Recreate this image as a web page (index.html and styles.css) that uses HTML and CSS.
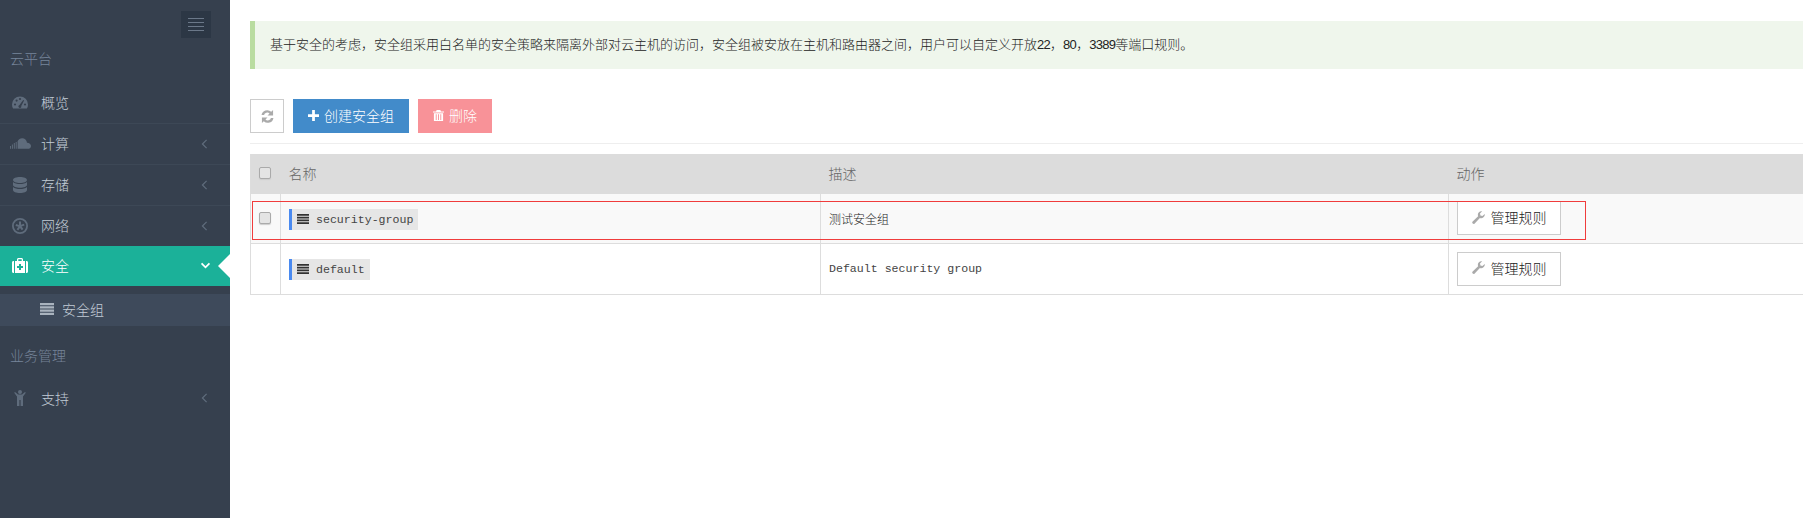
FILE: index.html
```html
<!DOCTYPE html>
<html lang="zh-CN">
<head>
    <meta charset="UTF-8">
    <title>安全组</title>
    <link rel="stylesheet" href="styles.css">
</head>
<body>

<aside class="sidebar">
    <div class="toggle"><span></span><span></span><span></span><span></span></div>
    <div class="section first">云平台</div>
    <ul class="menu">
        <li class="item">
            <svg class="ico" viewBox="0 0 16 16"><path d="M8 1.500a8 8 0 0 0-8 8c0 1.500.4 2.900 1.100 4h13.800c.7-1.100 1.100-2.500 1.100-4a8 8 0 0 0-8-8z"/><g fill="#36404e"><circle cx="3" cy="9.500" r="1.100"/><circle cx="4.600" cy="5.600" r="1.100"/><circle cx="8" cy="4" r="1.100"/><circle cx="13" cy="9.500" r="1.100"/><path d="M11.200 5l.9.6-2.800 5.400a1.500 1.500 0 1 1-1.800-1z"/></g></svg>
            <span>概览</span>
        </li>
        <li class="item">
            <svg class="ico ico-wide" viewBox="0 0 22 12"><path d="M0 8h1v3H0zM2 6.500h1V11H2zM4 5h1v6H4zM6 4h1v7H6z"/><path d="M8 3c1-1.800 2.700-3 4.700-3 2.700 0 4.900 2 5.100 4.600C20 4.500 22 6 22 8s-1.600 3-3.500 3H8z"/></svg>
            <span>计算</span>
            <svg class="chev" viewBox="0 0 8 12"><path d="M6.500 1L1.500 6l5 5"/></svg>
        </li>
        <li class="item">
            <svg class="ico" viewBox="0 0 16 16"><path d="M1 3c0-1.700 3.200-3 7-3s7 1.300 7 3-3.200 3-7 3-7-1.300-7-3zM1 5c1.500 1.500 4.200 2 7 2s5.500-.5 7-2v3c0 1.500-3.200 2.700-7 2.700S1 9.500 1 8zM1 10c1.500 1.500 4.200 2 7 2s5.500-.5 7-2v3c0 1.700-3.200 3-7 3s-7-1.300-7-3z"/></svg>
            <span>存储</span>
            <svg class="chev" viewBox="0 0 8 12"><path d="M6.500 1L1.500 6l5 5"/></svg>
        </li>
        <li class="item">
            <svg class="ico" viewBox="0 0 16 16"><path fill-rule="evenodd" d="M8 0a8 8 0 1 1 0 16A8 8 0 0 1 8 0zm0 1.800a6.200 6.200 0 1 0 0 12.400A6.200 6.200 0 0 0 8 1.800z"/><path d="M7 3.500h2v3.200l2.900-1 .6 1.900-2.900.9 1.800 2.500-1.600 1.200L8 10l-1.800 2.500-1.600-1.200 1.800-2.500-2.900-.9.600-1.900 2.900 1z"/></svg>
            <span>网络</span>
            <svg class="chev" viewBox="0 0 8 12"><path d="M6.500 1L1.500 6l5 5"/></svg>
        </li>
        <li class="item active">
            <svg class="ico" viewBox="0 0 16 16"><path fill-rule="evenodd" d="M5 3V1.500C5 .7 5.700 0 6.500 0h3c.8 0 1.500.7 1.500 1.500V3h2v12H3V3zm1.300 0h3.400V1.300H6.300zM7 6v2H5v2h2v2h2v-2h2V8H9V6z"/><path d="M0 4.500C0 3.700.6 3 1.500 3H2v12h-.5C.6 15 0 14.300 0 13.500zM14 3h.5c.9 0 1.500.7 1.500 1.500v9c0 .8-.6 1.500-1.500 1.500H14z"/></svg>
            <span>安全</span>
            <svg class="chev" viewBox="0 0 12 8"><path d="M1.500 1.500L6 6l4.500-4.500"/></svg>
        </li>
    </ul>
    <div class="sub">
        <svg class="bars" viewBox="0 0 14 12"><path d="M0 0h14v2.200H0zM0 3.300h14v2.200H0zM0 6.600h14v2.200H0zM0 9.800h14V12H0z"/></svg>
        <span>安全组</span>
    </div>
    <div class="section">业务管理</div>
    <ul class="menu">
        <li class="item">
            <svg class="ico" viewBox="0 0 16 16"><circle cx="8" cy="2" r="2"/><path d="M3 2l3 2.500h4L13 2l.8.8L11 6.500V16H8.600v-6h-1.200v6H5V6.500L2.200 2.800z"/></svg>
            <span>支持</span>
            <svg class="chev" viewBox="0 0 8 12"><path d="M6.500 1L1.500 6l5 5"/></svg>
        </li>
    </ul>
</aside>

<main class="content">
    <div class="notice">基于安全的考虑，安全组采用白名单的安全策略来隔离外部对云主机的访问，安全组被安放在主机和路由器之间，用户可以自定义开放<span class="num">22</span>，<span class="num">80</span>，<span class="num">3389</span>等端口规则。</div>

    <div class="toolbar">
        <button class="btn btn-icon">
            <svg viewBox="0 0 14 14"><path d="M13 0v6H7l2.200-2.200A3.500 3.500 0 0 0 3.300 5.500H.6A6.200 6.200 0 0 1 11 1.900zM1 14V8h6l-2.200 2.200a3.500 3.500 0 0 0 5.900-1.700h2.700A6.200 6.200 0 0 1 3 12.100z"/></svg>
        </button>
        <button class="btn btn-primary">
            <svg viewBox="0 0 12 12"><path d="M4.500 0h3v4.500H12v3H7.500V12h-3V7.500H0v-3h4.500z"/></svg>
            创建安全组
        </button>
        <button class="btn btn-danger">
            <svg viewBox="0 0 12 12"><path fill-rule="evenodd" d="M4 0h4l.7 1.500H12v1.200H0V1.500h3.300zM1 3.500h10V12H1zm2 1.200V11h1V4.700zm2.500 0V11h1V4.700zm2.500 0V11h1V4.700z"/></svg>
            删除
        </button>
    </div>

    <div class="table-wrap">
        <table class="list">
            <colgroup>
                <col class="c-check"><col class="c-name"><col class="c-desc"><col>
            </colgroup>
            <thead>
                <tr>
                    <th><input type="checkbox" class="check"></th>
                    <th>名称</th>
                    <th>描述</th>
                    <th>动作</th>
                </tr>
            </thead>
            <tbody>
                <tr class="odd">
                    <td><input type="checkbox" class="check"></td>
                    <td>
                        <span class="tag">
                            <svg viewBox="0 0 12 10"><path d="M0 0h12v1.700H0zM0 2.700h12v1.700H0zM0 5.500h12v1.700H0zM0 8.300h12V10H0z"/></svg>
                            security-group
                        </span>
                    </td>
                    <td class="desc">测试安全组</td>
                    <td>
                        <button class="btn btn-rule">
                            <svg viewBox="0 0 14 14"><path d="M13.800 3.200a4 4 0 0 1-5.300 4.300L2.900 13.400a1.400 1.400 0 0 1-2.200-2l5.900-5.700A4 4 0 0 1 11 .3L8.600 2.700l.5 2.100 2.100.6z"/></svg>
                            管理规则
                        </button>
                    </td>
                </tr>
                <tr>
                    <td></td>
                    <td>
                        <span class="tag">
                            <svg viewBox="0 0 12 10"><path d="M0 0h12v1.700H0zM0 2.700h12v1.700H0zM0 5.500h12v1.700H0zM0 8.300h12V10H0z"/></svg>
                            default
                        </span>
                    </td>
                    <td class="desc mono">Default security group</td>
                    <td>
                        <button class="btn btn-rule">
                            <svg viewBox="0 0 14 14"><path d="M13.800 3.200a4 4 0 0 1-5.300 4.300L2.900 13.400a1.400 1.400 0 0 1-2.200-2l5.900-5.700A4 4 0 0 1 11 .3L8.600 2.700l.5 2.100 2.100.6z"/></svg>
                            管理规则
                        </button>
                    </td>
                </tr>
            </tbody>
        </table>
        <div class="highlight"></div>
    </div>
</main>

</body>
</html>
```

FILE: styles.css
```css
* {
    box-sizing: border-box;
}
html, body {
    height: 100%;
}
body {
    margin: 0;
    display: flex;
    overflow: hidden;
    background-color: #fff;
    color: #222;
    font-family: "Noto Sans CJK SC", "Liberation Sans", sans-serif;
    font-size: 14px;
    font-weight: 300;
}

/* sidebar */
.sidebar {
    width: 230px;
    flex: none;
    padding-top: 11px;
    background-color: #36404e;
}
.toggle {
    width: 30px;
    height: 27px;
    margin-left: 181px;
    padding: 7px 7px 0;
    background-color: #2c3745;
}
.toggle span {
    display: block;
    height: 1px;
    margin-bottom: 3px;
    background-color: #6b7889;
}
.section {
    height: 52px;
    padding: 19px 0 0 10px;
    color: #76859a;
    line-height: 20px;
}
.section.first {
    height: 45px;
    padding-top: 10px;
}
.menu {
    list-style: none;
    margin: 0;
    padding: 0;
}
.item {
    position: relative;
    display: flex;
    align-items: center;
    height: 41px;
    padding: 0 0 2px 41px;
    border-bottom: 1px solid #3d4856;
    color: #c2ccd6;
}
.menu .item:last-child {
    border-bottom: none;
}
.item .ico {
    position: absolute;
    left: 12px;
    top: 12px;
    width: 16px;
    height: 16px;
    fill: #5f6c7c;
}
.item .ico-wide {
    left: 10px;
    width: 21px;
}
.item .chev {
    position: absolute;
    left: 201px;
    top: 15px;
    width: 7px;
    height: 10px;
    fill: none;
    stroke: #5f6c7c;
    stroke-width: 1.500;
}
.item.active {
    height: 40px;
    margin-top: -1px;
    background-color: #1bb199;
    color: #fff;
}
.item.active .ico {
    fill: #fff;
}
.item.active .chev {
    top: 16px;
    left: 200px;
    width: 11px;
    height: 7px;
    stroke: #fff;
    stroke-width: 2;
}
.item.active::after {
    content: "";
    position: absolute;
    right: 0;
    top: 8px;
    border: 12px solid transparent;
    border-left-width: 0;
    border-right-color: #fff;
}
.sub {
    display: flex;
    align-items: center;
    height: 32px;
    margin-top: 8px;
    padding: 0 0 2px 40px;
    background-color: #3e4a5b;
    color: #c2ccd6;
}
.sub .bars {
    width: 14px;
    height: 12px;
    margin-right: 8px;
    fill: #a9b3be;
}

/* content */
.content {
    flex: 1;
    min-width: 0;
    padding: 21px 0 0 20px;
}
.notice {
    height: 48px;
    padding-left: 15px;
    border-left: 5px solid #b9dca0;
    background-color: #eff6ec;
    font-size: 13px;
    line-height: 46px;
}
.num {
    font-family: "Liberation Sans", sans-serif;
    font-weight: 400;
    letter-spacing: -0.7px;
}
.toolbar {
    display: flex;
    gap: 9px;
    margin-top: 30px;
    padding-bottom: 10px;
    border-bottom: 1px solid #eee;
}
.btn {
    display: inline-flex;
    align-items: center;
    justify-content: center;
    height: 34px;
    padding: 0 0 2px;
    border: 1px solid #ccc;
    border-radius: 0;
    background-color: #fff;
    color: #222;
    font-family: inherit;
    font-size: 14px;
    font-weight: 300;
}
.btn-icon {
    width: 34px;
    padding: 0;
}
.btn-icon svg {
    width: 13px;
    height: 13px;
    fill: #aaa;
}
.btn-primary, .btn-danger {
    border: none;
    color: #fff;
}
.btn-primary {
    width: 116px;
    background-color: #428bca;
}
.btn-danger {
    width: 74px;
    background-color: #f89298;
}
.btn-primary svg, .btn-danger svg {
    width: 11px;
    height: 11px;
    margin-right: 5px;
    fill: #fff;
}

/* table */
.table-wrap {
    position: relative;
    margin-top: 10px;
}
.list {
    width: 100%;
    table-layout: fixed;
    border-collapse: collapse;
    border-left: 1px solid #ddd;
}
.c-check {
    width: 30px;
}
.c-name {
    width: 540px;
}
.c-desc {
    width: 628px;
}
.list th {
    height: 40px;
    padding: 0 8px 2px;
    background-color: #dcdcdc;
    color: #666;
    font-weight: 300;
    text-align: left;
}
.list td {
    height: 51px;
    padding: 0 8px;
    border: 1px solid #ddd;
    border-top: none;
}
.list .odd td {
    height: 49px;
    background-color: #f9f9f9;
}
.list td:last-child {
    border-right: none;
}
.check {
    appearance: none;
    display: block;
    width: 12px;
    height: 12px;
    margin: 0;
    border: 1px solid #aaa;
    border-radius: 2px;
    background-color: #e4e4e4;
    box-shadow: 0 1px 1px #ccc;
}
.tag {
    display: inline-flex;
    align-items: center;
    height: 21px;
    padding: 0 5px;
    border-left: 3px solid #4a8af0;
    background-color: #e6e6e6;
    color: #444;
    font-family: "Liberation Mono", monospace;
    font-size: 11.600px;
    font-weight: 400;
    vertical-align: middle;
}
.tag svg {
    width: 12px;
    height: 10px;
    margin-right: 7px;
    fill: #333;
}
.desc {
    font-size: 12px;
}
.mono {
    color: #444;
    font-family: "Liberation Mono", monospace;
    font-size: 11.600px;
    font-weight: 400;
}
.btn-rule {
    width: 104px;
}
.btn-rule svg {
    width: 13px;
    height: 13px;
    margin-right: 6px;
    fill: #aaa;
}

/* red box drawn over the first row */
.highlight {
    position: absolute;
    left: 2px;
    top: 47px;
    width: 1334px;
    height: 39px;
    border: 1px solid #f03c3c;
    pointer-events: none;
}
```
